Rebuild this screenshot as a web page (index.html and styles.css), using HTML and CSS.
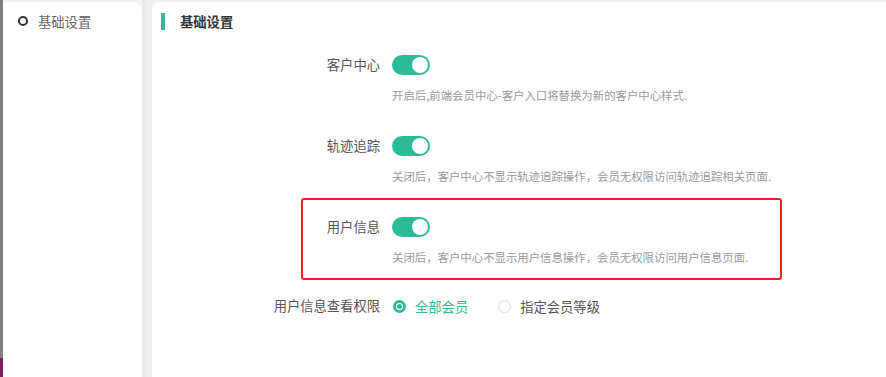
FILE: index.html
```html
<!DOCTYPE html>
<html lang="zh">
<head>
<meta charset="utf-8">
<link rel="stylesheet" href="styles.css">
</head>
<body>
<div class="page">
  <div class="edge"></div>
  <aside class="side">
    <div class="menu-item"><span class="ring"></span><span>基础设置</span></div>
  </aside>
  <div class="gap"></div>
  <main class="main">
    <div class="head"><span class="bar"></span><span class="title">基础设置</span></div>
    <div class="form">
      <div class="item">
        <div class="label">客户中心</div>
        <div class="control">
          <span class="switch"><span class="knob"></span></span>
          <div class="desc">开启后,前端会员中心-客户入口将替换为新的客户中心样式.</div>
        </div>
      </div>
      <div class="item">
        <div class="label">轨迹追踪</div>
        <div class="control">
          <span class="switch"><span class="knob"></span></span>
          <div class="desc">关闭后，客户中心不显示轨迹追踪操作，会员无权限访问轨迹追踪相关页面.</div>
        </div>
      </div>
      <div class="item marked">
        <div class="label">用户信息</div>
        <div class="control">
          <span class="switch"><span class="knob"></span></span>
          <div class="desc">关闭后，客户中心不显示用户信息操作，会员无权限访问用户信息页面.</div>
        </div>
        <span class="mark"></span>
      </div>
      <div class="item radios">
        <div class="label">用户信息查看权限</div>
        <div class="control row">
          <span class="radio on"><span class="dot"></span><span class="rtext">全部会员</span></span>
          <span class="radio"><span class="dot"></span><span class="rtext">指定会员等级</span></span>
        </div>
      </div>
    </div>
  </main>
</div>
</body>
</html>
```

FILE: styles.css
```css
* { box-sizing: border-box; }
html, body { margin: 0; padding: 0; }
body {
  width: 886px;
  height: 377px;
  overflow: hidden;
  background: #f3f4f5;
  font-family: "Noto Sans CJK SC", "Noto Sans", sans-serif;
}
.page {
  display: flex;
  height: 377px;
}
.edge {
  width: 3px;
  flex: none;
  background: linear-gradient(to bottom, #808080 0, #808080 358px, #7a1d5c 358px);
}
.side {
  width: 139px;
  flex: none;
  margin-top: 2px;
  background: #fff;
  border-top-right-radius: 9px;
  padding: 10px 0 0 15px;
}
.menu-item {
  display: flex;
  align-items: center;
  height: 18px;
  font-size: 13.3px;
  color: #666;
}
.ring {
  width: 10px;
  height: 10px;
  border: 2px solid #333;
  border-radius: 50%;
  margin-right: 10px;
  margin-left: 0;
}
.gap {
  width: 10px;
  flex: none;
  background: linear-gradient(to right, #e2e5e9, #eceef1 40%, #eef0f3);
}
.main {
  flex: 1;
  margin-top: 2px;
  background: #fff;
  border-top-left-radius: 8px;
  padding: 11px 0 0 9px;
}
.head {
  display: flex;
  align-items: center;
  height: 17px;
}
.bar {
  width: 4px;
  height: 17px;
  background: #2cbb97;
  margin-right: 15px;
}
.title {
  font-size: 13.3px;
  font-weight: 700;
  color: #333;
}
.form {
  margin-top: 25px;
}
.item {
  display: flex;
  position: relative;
  margin-bottom: 33px;
}
.label {
  width: 219px;
  flex: none;
  margin-right: 12px;
  text-align: right;
  font-size: 13.3px;
  line-height: 20px;
  color: #555;
}
.control {
  display: flex;
  flex-direction: column;
  align-items: flex-start;
}
.switch {
  width: 38px;
  height: 20px;
  border-radius: 10px;
  background: #2cbb97;
  display: flex;
  align-items: center;
  justify-content: flex-end;
  padding-right: 2px;
}
.knob {
  width: 16px;
  height: 16px;
  border-radius: 50%;
  background: #fff;
}
.desc {
  margin-top: 12px;
  font-size: 11.4px;
  line-height: 16px;
  color: #9a9a9a;
  white-space: nowrap;
}
.mark {
  position: absolute;
  left: 140px;
  top: -19px;
  width: 481px;
  height: 82px;
  border: 2px solid #f0231c;
  border-radius: 3px;
  pointer-events: none;
}
.item.marked { margin-bottom: 31px; }
.row {
  flex-direction: row;
  align-items: center;
  height: 20px;
}
.radio {
  display: flex;
  align-items: center;
  margin-right: 29px;
  font-size: 13.3px;
  color: #555;
}
.radio .dot {
  width: 13px;
  height: 13px;
  border-radius: 50%;
  border: 1px solid #dcdfe6;
  background: #fff;
  margin-left: 1px;
  margin-right: 9px;
}
.radio.on .dot {
  border: none;
  background: radial-gradient(circle, #2cbb97 0, #2cbb97 2.2px, #fff 2.6px, #fff 3.4px, #2cbb97 3.8px);
}
.radio.on { color: #2cbb97; }
```
